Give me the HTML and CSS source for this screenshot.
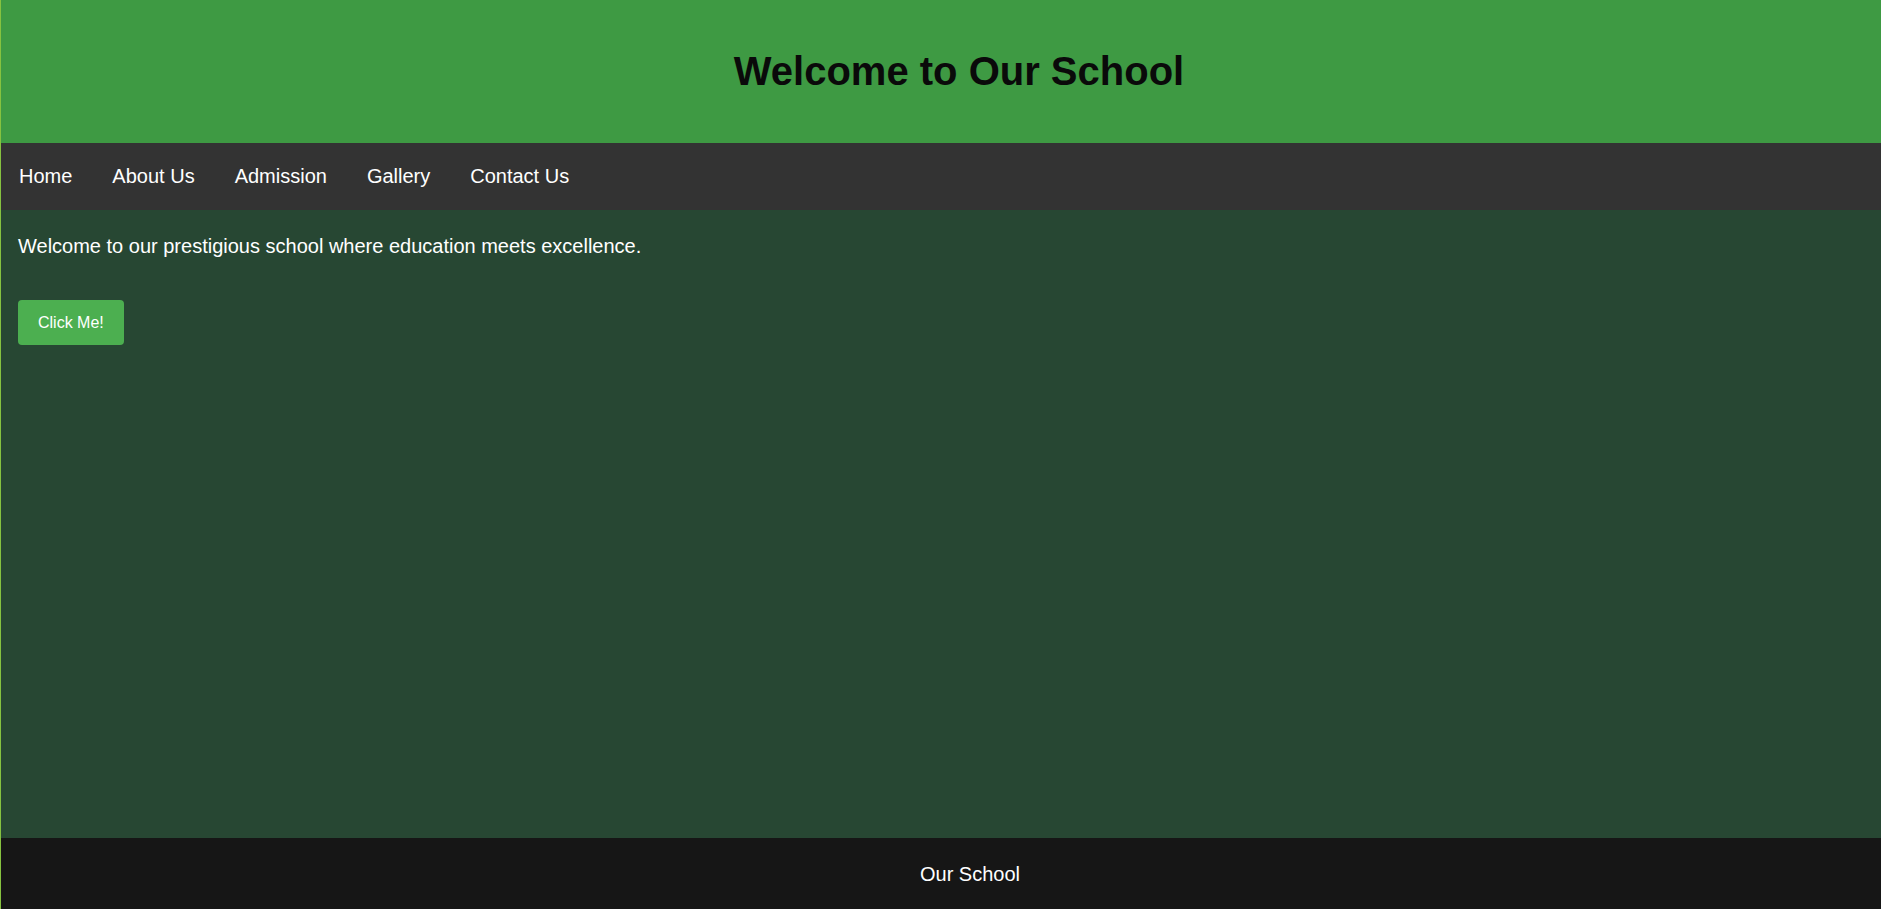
FILE: index.html
```html
<!DOCTYPE html>
<html lang="en">
<head>
<meta charset="utf-8">
<title>Our School</title>
<link rel="stylesheet" href="styles.css">
</head>
<body>
<div class="page">
  <header class="site-header">
    <h1 class="title">Welcome to Our School</h1>
  </header>
  <nav class="site-nav">
    <a href="#" class="nav-link">Home</a>
    <a href="#" class="nav-link">About Us</a>
    <a href="#" class="nav-link">Admission</a>
    <a href="#" class="nav-link">Gallery</a>
    <a href="#" class="nav-link">Contact Us</a>
  </nav>
  <main class="content">
    <p class="intro">Welcome to our prestigious school where education meets excellence.</p>
    <button class="btn" type="button">Click Me!</button>
  </main>
  <footer class="site-footer">
    <p class="footer-text">Our School</p>
  </footer>
</div>
</body>
</html>
```

FILE: styles.css
```css
html, body {
  margin: 0;
  padding: 0;
}
body {
  font-family: "Liberation Sans", Arial, sans-serif;
  background: #274733;
}
.page {
  min-height: 100vh;
  display: flex;
  flex-direction: column;
  border-left: 1px solid #86c240;
  box-sizing: border-box;
}
.site-header {
  background: #3e9a43;
  height: 143px;
  display: flex;
  align-items: center;
  justify-content: center;
  padding-left: 36px;
}
.title {
  margin: 0;
  font-size: 40px;
  font-weight: bold;
  color: #0a0a0a;
}
.site-nav {
  background: #333333;
  height: 67px;
  display: flex;
  align-items: center;
  gap: 40px;
  padding-left: 18px;
}
.nav-link {
  color: #ffffff;
  text-decoration: none;
  font-size: 20px;
}
.content {
  flex: 1;
  background: #274733;
  padding: 0 17px;
  display: flex;
  flex-direction: column;
  align-items: flex-start;
}
.intro {
  margin: 25px 0 0;
  color: #ffffff;
  font-size: 20px;
  line-height: 23px;
}
.btn {
  margin-top: 42px;
  background: #4caf50;
  color: #ffffff;
  border: none;
  border-radius: 4px;
  font-family: "Liberation Sans", Arial, sans-serif;
  font-size: 16px;
  height: 45px;
  padding: 0 20px;
  cursor: pointer;
}
.site-footer {
  background: #161616;
  height: 71px;
  box-sizing: border-box;
  padding-top: 2px;
  display: flex;
  align-items: center;
  justify-content: center;
  padding-left: 58px;
}
.footer-text {
  margin: 0;
  color: #ffffff;
  font-size: 20px;
}
```
